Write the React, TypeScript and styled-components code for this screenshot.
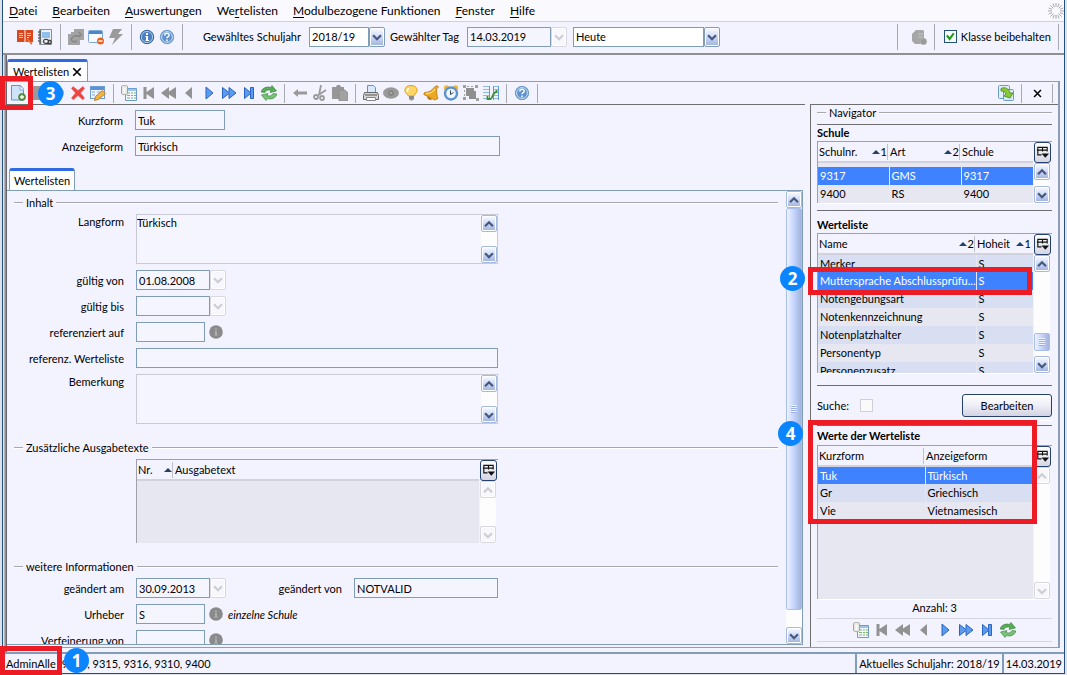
import React from "react";
import styled, { createGlobalStyle, css } from "styled-components";

const GlobalStyle = createGlobalStyle`
  * { box-sizing: border-box; }
  body {
    margin: 0;
    overflow: hidden;
    background: #dde1ea;
    color: #000;
    font: 11px/16px Lato, "Open Sans", sans-serif;
  }
  button, input, select, textarea { font: inherit; color: inherit; margin: 0; }
`;

const line = "#7f9db9";
const dark = "#6e6e6e";
const face = "#f3f3ff";

/* ---------- icons ---------- */

const grey = "#9a9a9a";

const icons: Record<string, React.ReactNode> = {
  book: (
    <>
      <path d="M0 1h7.500v12H0zM8.500 1H16v12H8.500z" fill="#d9481c" />
      <path d="M2 4.500h4M2 6.500h4M2 8.500h4M10 4.500h4M10 6.500h4M10 8.500h2" stroke="#f9c9b4" fill="none" />
      <path d="M10 9l5.500 5-1 2-4.500-5z" fill="#f07040" />
    </>
  ),
  notebook: (
    <>
      <path d="M2.500 .5h12v15h-12z" fill="#eef4fb" stroke="#8a8f96" />
      <path d="M5 3h8v6H5z" fill="#8fc0ea" />
      <path d="M3.500 1v14M1 3h3M1 6h3M1 9h3M1 12h3" stroke="#66676b" strokeWidth="1.300" fill="none" />
      <path d="M6.500 12a2 2 0 0 1 2-1.700h1a2 2 0 0 1 0 4h-1a2 2 0 0 1-2-2.300zM10.500 11.500h3a2 2 0 0 1 0 3h-3" fill="none" stroke="#444" strokeWidth="1.300" />
    </>
  ),
  pages: (
    <>
      <path d="M6 0h10v11h-4v5H0V5h3V3h3z" fill="#a3a3a3" />
      <path d="M3 11c1-4 4-5 8-4M3 11l3 2 3-1M11 3l2 3-3 2" fill="none" stroke="#868686" strokeWidth="1.500" />
    </>
  ),
  windowMinus: (
    <>
      <rect x=".5" y="1.500" width="14" height="12" rx="1" fill="#f7fbff" stroke="#7ea7da" />
      <path d="M1 2h13v3H1z" fill="#4c86d0" />
      <circle cx="12.500" cy="12" r="3.500" fill="#e8641d" />
      <path d="M10.500 12h4" stroke="#fff" strokeWidth="1.400" />
    </>
  ),
  bolt: <path d="M5 0h9l-4 5h5L4 16l3-7H1z" fill={grey} />,
  info: (
    <>
      <circle cx="8" cy="8" r="6.700" fill="#4a80bd" stroke="#2f639f" />
      <circle cx="8" cy="8" r="5.600" fill="none" stroke="#a9c9e8" />
      <path d="M7 4h2v2H7zM6.500 7H9v4h1v1H6.500v-1H7V8h-.5z" fill="#fff" />
    </>
  ),
  help: (
    <>
      <circle cx="8" cy="8" r="6.700" fill="#5e92cc" stroke="#6f9bcb" />
      <circle cx="8" cy="8" r="5.400" fill="none" stroke="#cfe2f5" />
      <path d="M5.800 6.500c0-3 4.400-2.800 4.400-.3 0 1.500-2.200 1.500-2.200 3M8 10.500v1.700" stroke="#fff" strokeWidth="1.500" fill="none" />
    </>
  ),
  database: (
    <>
      <path d="M1 5l4-4h7l1 1v8l-3 5H4l-3-3z" fill="#a6a6a6" />
      <path d="M7 5h5M7 8h5" stroke="#c4c4c4" />
      <circle cx="12.500" cy="12.500" r="3.200" fill="#999" stroke="#b8b8b8" strokeWidth=".6" />
    </>
  ),
  newDoc: (
    <>
      <path d="M1.500.5h9l3 3.500v11h-12z" fill="#cfe3f8" stroke="#5e95cf" />
      <path d="M10 1v4h4" fill="#f5faff" stroke="#7eaad8" />
      <circle cx="12" cy="12" r="3.500" fill="#5c9440" stroke="#3f7426" strokeWidth=".6" />
      <path d="M10 12h4M12 10v4" stroke="#fff" strokeWidth="1.300" />
    </>
  ),
  save: <path d="M1 1h14v14H1z" fill={grey} />,
  undo: <circle cx="8" cy="8" r="6" fill={grey} />,
  remove: <path d="M3 1.500l5 4 5-4 1.500 2L10.500 8l4 5-1.800 1.800L8 10.500l-4.700 4.300L1.500 13l4-5-4-4.500z" fill="#ee4440" stroke="#e65a56" strokeWidth=".6" />,
  edit: (
    <>
      <rect x=".5" y="1.500" width="14" height="12" fill="#eef5fd" stroke="#6d9bd2" />
      <path d="M1 2h13v3H1z" fill="#5b92d6" />
      <path d="M2 7h3M7 7h5M2 10h3" stroke="#7ea7da" />
      <path d="M4.500 15.500l1-4 7-6 3 3-7 6z" fill="#f2b544" stroke="#a87420" strokeWidth=".8" />
    </>
  ),
  sheet: (
    <>
      <path d="M4.500 3.500h11v12h-11z" fill="#f4f9ff" stroke="#6d9bcf" />
      <path d="M5 5h10" stroke="#9dc3ea" strokeWidth="2" />
      <path d="M6 8h3M10 8h2M13 8h2M6 10.500h3M10 10.500h2M13 10.500h2M6 13h3M10 13h2M13 13h2" stroke="#7fb069" />
      <path d="M.5 1.500c0-1.500 6-1.500 6 0v7c0 1.500-6 1.500-6 0z" fill="#e9e9e4" stroke="#a3a39c" />
      <path d="M3.500 3v5" stroke="#fff" strokeWidth="1.500" />
    </>
  ),
  first: <path d="M2.500 2h3v5L13 2v12L5.500 9v5h-3z" fill="#929292" />,
  fastBack: <path d="M0 8l8-6v4.500L15 2v12L8 9.500V14z" fill="#929292" />,
  back: <path d="M4 8l7-6v12z" fill="#929292" />,
  next: <path d="M5 2l7 6-7 6z" fill="#5b9bee" stroke="#2864c0" />,
  fastNext: <path d="M1.500 2.500L8 7.500v-5L15 8l-7 5.500v-5l-6.500 5z" fill="#5b9bee" stroke="#2864c0" />,
  last: <path d="M3.500 2.500l6 5v-5h3v11h-3v-5l-6 5z" fill="#5b9bee" stroke="#2864c0" />,
  refresh: (
    <>
      <path d="M0 7c1-4 6-6 9.500-4.500L11 .5 15.500 6 9 7.500l1-2C7.500 4.500 5 5 4 7.500z" fill="#5aab57" stroke="#2f8136" strokeWidth=".6" />
      <path d="M16 9c-1 4-6 6-9.500 4.500L5 15.500.5 10 7 8.500l-1 2c2.500 1 5 .5 6-2z" fill="#79c274" stroke="#2f8136" strokeWidth=".6" />
    </>
  ),
  arrowLeft: <path d="M1 8l5-4v2.500h9v3H6V12z" fill={grey} />,
  cut: (
    <g fill="none" stroke={grey} strokeWidth="1.800">
      <path d="M9 0L7 10M14 5L5 11" />
      <circle cx="4" cy="12" r="2" />
      <circle cx="10" cy="13" r="2" />
    </g>
  ),
  paste: (
    <>
      <path d="M0 2h4l1-2h3l1 2h3v3H7v9H0z" fill="#979797" />
      <path d="M7 5h6l3 3v8H7z" fill="#a2a2a2" stroke="#8a8a8a" strokeWidth=".8" />
    </>
  ),
  print: (
    <>
      <path d="M4.500 7V.5h6l2 2V7" fill="#d7e9fb" stroke="#5b94cf" />
      <path d="M1.500 7.500h13l1 3v4H.5v-4z" fill="#d4d4d4" stroke="#6a6a6a" />
      <path d="M2 10h12" stroke="#555" />
      <path d="M3.500 12.500h9v3h-9z" fill="#fff" stroke="#888" />
    </>
  ),
  eye: (
    <>
      <ellipse cx="8" cy="8" rx="8" ry="5.800" fill="#9a9a9a" />
      <circle cx="8" cy="8" r="3" fill="#878787" />
      <circle cx="8" cy="8" r="1" fill="#b0b0b0" />
    </>
  ),
  bulb: (
    <>
      <path d="M8 .5c-7 0-7.500 6-4 8.500l1.500 2h5L12 9c3.500-2.500 3-8.500-4-8.500z" fill="#fdd667" stroke="#e79b20" />
      <path d="M6 3.500c-2 .5-2 2.500-1 3.500" stroke="#fff" strokeWidth="1.500" fill="none" />
      <path d="M6 11h5v3.500H9.500v1h-2v-1H6z" fill="#8b8b8b" />
    </>
  ),
  bell: (
    <>
      <path d="M14 .5l1.500 1.500-2 2c.5 4 0 7 1.500 9.500l-3 1.500L.8 9.500l.7-2C5 7.500 9 6 11 2.500z" fill="#eda91f" stroke="#b87410" strokeWidth=".8" />
      <path d="M3 8.500c4 0 7.500-2 9-4.500" stroke="#fde08a" strokeWidth="1.300" fill="none" />
      <path d="M4 11l5 3c-1 2-5 1-5-3z" fill="#b87416" />
    </>
  ),
  clock: (
    <>
      <circle cx="3.500" cy="3" r="2.700" fill="#f1b53c" />
      <circle cx="12.500" cy="3" r="2.700" fill="#f1b53c" />
      <circle cx="8" cy="8.500" r="6" fill="#eef6ff" stroke="#5b93cf" strokeWidth="2.400" />
      <path d="M7.500 5.500v4l3-2" stroke="#345" fill="none" />
    </>
  ),
  group: (
    <>
      <path d="M3 3h8v3h2v8H6v-3H3z" fill="#8f8f8f" />
      <path d="M0 0h3v3H0zM12 0h3v3h-3zM0 12h3v3H0zM13 13h3v3h-3zM4 1h2v1H4zM8 1h2v1H8zM1 5h1v2H1zM1 9h1v2H1z" fill="#a0a0a0" />
    </>
  ),
  compare: (
    <>
      <path d="M0 1.500h6M0 4.500h6M0 7.500h6M0 10.500h6M0 13.500h6M11 1.500h4M11 4.500h4M11 7.500h4M11 10.500h4M11 13.500h4" stroke="#8fbbe6" />
      <path d="M6.500 1v14M10.500 1v14M15.500 1v14" stroke="#5f9ad6" />
      <path d="M4.500 11v3h3c2 0 2-7 6-7V5" stroke="#3f8f3a" strokeWidth="1.800" fill="none" />
    </>
  ),
  transfer: (
    <>
      <rect x=".5" y=".5" width="11" height="13" rx="1" fill="#e3effb" stroke="#6c9ccc" />
      <rect x="5.500" y="4.500" width="10" height="11" rx="1" fill="#d5e6f7" stroke="#6c9ccc" />
      <path d="M3 3.500c4-2 8 0 9 4.500h3l-3 5-6-2 2-2c-1-2-2-3-5-3z" fill="#8cc832" stroke="#3f8a1c" strokeWidth=".8" />
    </>
  ),
  spinner: (
    <path d="M8 0v4M8 12v4M0 8h4M12 8h4M2.300 2.300l3 3M10.700 10.700l3 3M2.300 13.700l3-3M10.700 5.300l3-3M5 .6l1.300 3.600M9.700 11.800l1.300 3.600M.6 5l3.600 1.300M11.800 9.700l3.600 1.300M11 .6L9.700 4.200M6.300 11.800L5 15.400M.6 11l3.600-1.300M11.800 6.300L15.400 5" stroke="#a9a9ae" />
  ),
  infoGrey: (
    <>
      <circle cx="8" cy="8" r="7.800" fill="#8a8a8a" />
      <path d="M7 4h2v2H7zM6.500 7H9v4h1v1H6v-1h1V8h-.5z" fill="#b3b3b3" />
    </>
  ),
  columns: (
    <>
      <path d="M13 7V2.500H3v8h4M2 5.500h11M8 3v4" fill="none" stroke="#111" strokeWidth="1.200" />
      <path d="M7 9h8l-4 4.500z" fill="#111" />
    </>
  ),
  up: <path d="M3.500 10.500L8 6l4.500 4.500" fill="none" stroke="currentColor" strokeWidth="2.600" />,
  down: <path d="M3.500 6L8 10.500 12.500 6" fill="none" stroke="currentColor" strokeWidth="2.600" />,
  close: <path d="M3 3l10 10M13 3L3 13" stroke="#000" strokeWidth="2.200" />,
  check: <path d="M3.500 6.500L7 11l5-7" fill="none" stroke="#1f9a1f" strokeWidth="2.600" />,
};

const Svg = styled.svg<{ $size: number }>`
  display: block;
  flex: none;
  width: ${(p) => p.$size}px;
  height: ${(p) => p.$size}px;
`;

const Icon = ({ name, size = 16 }: { name: string; size?: number }) => (
  <Svg $size={size} viewBox="0 0 16 16" aria-hidden="true">
    {icons[name]}
  </Svg>
);

/* ---------- window ---------- */

const Desktop = styled.div`
  display: flex;
  height: 100vh;
  padding: 0 2px 1px;
`;

const Window = styled.div`
  flex: 1;
  min-width: 0;
  display: flex;
  flex-direction: column;
  background: ${face};
  border: solid #26507c;
  border-width: 0 1px 1px;
`;

const MenuBar = styled.nav`
  display: flex;
  align-items: center;
  gap: 15px;
  height: 22px;
  padding: 0 0 0 6px;
  background: #f9f9fe;
  border-bottom: 1px solid #d0d0d8;
  font-size: 12px;
`;

const MenuItem = styled.button`
  padding: 0;
  border: 0;
  background: none;
  white-space: nowrap;
  text-underline-offset: 2px;
`;

const Push = styled.div`
  margin-left: auto;
  display: flex;
  align-items: center;
`;

const ToolBar = styled.div`
  display: flex;
  align-items: center;
  height: 33px;
  padding: 0 0 2px 12px;
  border-bottom: 2px solid #909090;
`;

const Separator = styled.span<{ $tall?: boolean }>`
  flex: none;
  width: 1px;
  height: ${(p) => (p.$tall ? 26 : 19)}px;
  margin: 0 5px;
  background: #a9a9b0;
`;

const IconButton = styled.button`
  position: relative;
  flex: none;
  display: flex;
  align-items: center;
  justify-content: center;
  width: 20px;
  height: 20px;
  padding: 0;
  border: 0;
  background: none;
`;

const Tool = ({ icon, label }: { icon: string; label: string }) => (
  <IconButton type="button" aria-label={label}>
    <Icon name={icon} />
  </IconButton>
);

/* ---------- fields ---------- */

const BarLabel = styled.label<{ $w: number }>`
  flex: none;
  width: ${(p) => p.$w}px;
  padding-right: 8px;
  text-align: right;
  white-space: nowrap;
`;

const Gap = styled.span`
  flex: none;
  width: 6px;
`;

const TextInput = styled.input<{ $w: number }>`
  width: ${(p) => p.$w}px;
  height: 20px;
  padding: 0 2px;
  background: #f5f5ff;
  border: 1px solid ${line};
  border-radius: 0;
  outline: 0;
`;

const Combo = styled.span<{ $w: number }>`
  display: flex;
  width: ${(p) => p.$w}px;
`;

const Select = styled.select`
  flex: 1;
  min-width: 0;
  height: 20px;
  padding: 0 2px;
  appearance: none;
  background: #fff;
  border: 1px solid ${line};
  border-radius: 0;
`;

const arrowFace = css<{ $off?: boolean }>`
  flex: none;
  display: flex;
  align-items: center;
  justify-content: center;
  width: 16px;
  padding: 0;
  border: 1px solid ${(p) => (p.$off ? "#d8d8e2" : "#a6badf")};
  border-radius: 2px;
  color: ${(p) => (p.$off ? "#cdcdd6" : "#46597d")};
  background: ${(p) => (p.$off ? "#f8f8fc" : "linear-gradient(#fbfcff, #cdd9fa 50%, #9fb1da)")};
  box-shadow: inset 0 0 0 1px #fff;
`;

const ComboArrow = styled.span`
  ${arrowFace}
  height: 20px;
  border-color: #7f9db9;
`;

const ArrowButton = styled.button<{ $off?: boolean }>`
  ${arrowFace}
  height: 20px;
`;

const ScrollArrow = styled.button<{ $off?: boolean }>`
  ${arrowFace}
  height: 17px;
`;

const DateField = ({ id, value, w, label }: { id?: string; value: string; w: number; label: string }) => (
  <>
    <TextInput id={id} $w={w} defaultValue={value} />
    <ArrowButton type="button" $off disabled aria-label={label + " auswählen"}>
      <Icon name="down" size={14} />
    </ArrowButton>
  </>
);

const CheckBox = styled.input`
  appearance: none;
  width: 13px;
  height: 13px;
  border: 1px solid #cfcfd6;
  background: #fafafa;
`;

const Tick = styled.span`
  display: grid;
  > * { grid-area: 1 / 1; }
  > input { border-color: #24507e; }
  > svg { pointer-events: none; }
`;

const CheckLabel = styled.label`
  display: flex;
  align-items: center;
  gap: 4px;
  padding: 0 2px 0 4px;
  white-space: nowrap;
`;

/* ---------- scroll bar ---------- */

const Track = styled.div`
  flex: none;
  min-height: 0;
  display: flex;
  flex-direction: column;
  width: 16px;
  background: #fdfdfd;
`;

const Space = styled.div<{ $grow: number }>`
  flex: ${(p) => p.$grow} 1 0;
`;

const Thumb = styled.div<{ $grow: number }>`
  flex: ${(p) => p.$grow} 1 0;
  min-height: 17px;
  display: flex;
  align-items: center;
  justify-content: center;
  border: 1px solid #a9bfe8;
  border-radius: 2px;
  background: linear-gradient(90deg, #eef3ff, #c3d3fb 50%, #a3b4dc);
  &::after {
    content: "";
    width: 6px;
    height: 8px;
    background: repeating-linear-gradient(#eef3ff 0 1px, #9db3e4 1px 2px);
  }
`;

const ScrollBar = ({ off, thumb }: { off?: boolean; thumb?: [number, number, number] }) => (
  <Track>
    <ScrollArrow type="button" $off={off} aria-label="Nach oben">
      <Icon name="up" size={14} />
    </ScrollArrow>
    {thumb ? (
      <>
        <Space $grow={thumb[0]} />
        <Thumb $grow={thumb[1]} />
        <Space $grow={thumb[2]} />
      </>
    ) : (
      <Space $grow={1} />
    )}
    <ScrollArrow type="button" $off={off} aria-label="Nach unten">
      <Icon name="down" size={14} />
    </ScrollArrow>
  </Track>
);

/* ---------- work area ---------- */

const Workspace = styled.div`
  flex: 1;
  min-height: 0;
  display: flex;
  flex-direction: column;
  padding: 0 4px;
  background: linear-gradient(90deg, #e4e4ee 1px, #b4b4ba 1px 2px, #8e8e94 2px 3px, #66666c 3px 4px, transparent 4px);
`;

const TabStrip = styled.div<{ $pad: number }>`
  display: flex;
  align-items: flex-end;
  padding-left: ${(p) => p.$pad}px;
`;

const MainTabs = styled(TabStrip)`
  height: 26px;
`;

const InnerTabs = styled(TabStrip)`
  margin-top: 12px;
`;

const Tab = styled.button`
  display: flex;
  align-items: center;
  justify-content: space-between;
  width: 66px;
  height: 22px;
  padding: 0 2px 0 4px;
  background: #fff;
  border: 1px solid ${line};
  border-top: 3px solid #2f6ae0;
  border-bottom: 0;
  border-radius: 3px 3px 0 0;
  white-space: nowrap;
`;

const MainTab = styled(Tab)`
  width: 81px;
  padding: 0 4px 0 5px;
`;

const Frame = styled.div`
  flex: 1;
  min-height: 0;
  display: flex;
  flex-direction: column;
  border: solid #8b9fb8;
  border-width: 1px 2px 1px 0;
  margin-bottom: 4px;
`;

const IconBar = styled.div`
  display: flex;
  align-items: center;
  height: 22px;
  padding-left: 1px;
`;

const Columns = styled.div`
  flex: 1;
  min-height: 0;
  display: flex;
  gap: 5px;
`;

const Editor = styled.main`
  flex: 1;
  min-width: 0;
  display: flex;
  flex-direction: column;
  padding: 5px 2px 2px 0;
  border-top: 1px solid ${dark};
`;

const Rows = styled.div`
  display: flex;
  flex-direction: column;
  gap: 6px;
`;

const FieldRow = styled.div`
  display: flex;
  align-items: flex-start;
`;

const FieldLabel = styled.label<{ $w: number; $top?: boolean }>`
  flex: none;
  width: ${(p) => p.$w}px;
  margin-right: 12px;
  padding-top: ${(p) => (p.$top ? 0 : 3)}px;
  text-align: right;
  white-space: nowrap;
`;

const InnerPanel = styled.div`
  flex: 1;
  min-height: 0;
  display: flex;
  padding-left: 1px;
  border: solid ${line};
  border-width: 1px 1px 1px 0;
`;

const ScrollArea = styled.div`
  flex: 1;
  min-width: 0;
  overflow: hidden;
  padding: 4px 8px 0 6px;
`;

const Group = styled.fieldset`
  min-width: 0;
  margin: 0 0 16px;
  padding: 0;
  border: 0;
`;

const Legend = styled.legend`
  display: flex;
  align-items: center;
  gap: 3px;
  width: 100%;
  height: 16px;
  margin-bottom: 3px;
  padding: 0;
  white-space: nowrap;
  &::before, &::after {
    content: "";
    width: 9px;
    height: 2px;
    background: linear-gradient(#a6a6b0 50%, #fff 50%);
  }
  &::after { flex: 1; }
`;

const MemoBox = styled.div`
  display: flex;
  width: 362px;
  height: 50px;
  border: 1px solid #c9c9d6;
`;

const Memo = styled.textarea`
  flex: 1;
  min-width: 0;
  padding: 0;
  border: 0;
  outline: 0;
  resize: none;
  overflow: hidden;
  background: #f5f5ff;
`;

const InfoMark = styled.span`
  padding: 3px 5px 3px 4px;
`;

const Hint = styled.em`
  padding-top: 3px;
`;

/* ---------- tables ---------- */

const TableBox = styled.div<{ $h?: number; $w?: number }>`
  display: flex;
  ${(p) => (p.$h ? `height: ${p.$h}px;` : "flex: 1; min-height: 0;")}
  ${(p) => (p.$w ? `width: ${p.$w}px;` : "")}
  border: solid #a0a0a8;
  border-width: 1px 0 0 1px;
`;

const TableView = styled.div`
  flex: 1;
  min-width: 0;
  overflow: hidden;
  background: #e7e7f1;
`;

const SideColumn = styled.div`
  flex: none;
  width: 19px;
  padding: 0 1px;
  display: grid;
  grid-template-rows: auto 1fr;
`;

const ColumnButton = styled.button`
  display: flex;
  align-items: center;
  justify-content: center;
  width: 17px;
  height: 21px;
  padding: 0;
  background: linear-gradient(#fff, #d6d6e4);
  border: 1px solid #24406c;
  border-radius: 3px;
`;

const Table = styled.table`
  width: 100%;
  table-layout: fixed;
  border-collapse: collapse;
`;

const HeadCell = styled.th<{ $w?: number }>`
  ${(p) => (p.$w ? `width: ${p.$w}px;` : "")}
  height: 20px;
  padding: 0 1px;
  background: ${face};
  border-bottom: 2px solid #d2d2dc;
  font-weight: normal;
`;

const HeadInner = styled.div<{ $last?: boolean }>`
  display: flex;
  align-items: center;
  justify-content: space-between;
  height: 16px;
  border-right: 1px solid ${(p) => (p.$last ? "transparent" : "#c0c0c8")};
  white-space: nowrap;
`;

const Sort = styled.span`
  display: flex;
  align-items: center;
  gap: 1px;
  &::before {
    content: "";
    border: solid transparent;
    border-width: 0 4px 4px;
    border-bottom-color: #24406c;
  }
`;

const Row = styled.tr<{ $tone?: "selected" | "odd" | "gap" }>`
  height: ${(p) => (p.$tone === "gap" ? 5 : 18)}px;
  background: ${(p) => (p.$tone === "selected" ? "#3f82ff" : p.$tone === "odd" ? "#d8dff3" : "#e7e7f1")};
  color: ${(p) => (p.$tone === "selected" ? "#fff" : "#000")};
  td + td { border-left: 1px solid ${(p) => (p.$tone === "selected" ? "#dfe8ff" : "transparent")}; }
`;

const Cell = styled.td`
  padding: 0 0 0 2px;
  line-height: 16px;
  overflow: hidden;
  white-space: nowrap;
`;

type Col = { name: string; w?: number; sort?: string };
const DataTable = ({
  cols, rows, h, w, selected = -1, striped, gap, side,
}: {
  cols: Col[]; rows: string[][]; h?: number; w?: number; selected?: number; striped?: number; gap?: boolean; side: React.ReactNode;
}) => (
  <TableBox $h={h} $w={w}>
    <TableView>
      <Table>
        <thead>
          <tr>
            {cols.map((c, i) => (
              <HeadCell key={c.name} $w={c.w} scope="col">
                <HeadInner $last={i === cols.length - 1}>
                  {c.name}
                  {c.sort !== undefined && <Sort>{c.sort}</Sort>}
                </HeadInner>
              </HeadCell>
            ))}
          </tr>
        </thead>
        <tbody>
          {gap && <Row $tone="gap" />}
          {rows.map((r, i) => (
            <Row key={r[0]} $tone={i === selected ? "selected" : striped !== undefined && i % 2 === striped ? "odd" : undefined}>
              {r.map((v, k) => (
                <Cell key={k}>{v}</Cell>
              ))}
            </Row>
          ))}
        </tbody>
      </Table>
    </TableView>
    <SideColumn>
      <ColumnButton type="button" aria-label="Spalten auswählen">
        <Icon name="columns" size={15} />
      </ColumnButton>
      {side}
    </SideColumn>
  </TableBox>
);

/* ---------- navigator ---------- */

const Navigator = styled.aside`
  flex: none;
  display: flex;
  flex-direction: column;
  width: 248px;
  padding: 0 6px 0 6px;
  border: solid ${dark};
  border-width: 1px 0 0 1px;
`;

const Section = styled.section<{ $h?: number; $top?: number }>`
  position: relative;
  display: flex;
  flex-direction: column;
  ${(p) => (p.$h ? `height: ${p.$h}px; margin-bottom: 6px;` : "flex: 1; min-height: 0;")}
  padding-top: ${(p) => p.$top ?? 0}px;
  border-top: 1px solid ${dark};
  border-bottom: 1px solid #fff;
`;

const Heading = styled.h2<{ $tall?: boolean }>`
  margin: 0;
  font-size: 11px;
  line-height: ${(p) => (p.$tall ? 19 : 16)}px;
`;

const SearchRow = styled.div`
  display: flex;
  align-items: center;
  justify-content: space-between;
  height: 36px;
  margin: 5px 0 4px;
  padding-top: 5px;
  border-top: 1px solid ${dark};
  border-bottom: 1px solid #fff;
`;

const SearchLabel = styled.label`
  display: flex;
  align-items: center;
  gap: 11px;
`;

const PushButton = styled.button`
  width: 90px;
  height: 23px;
  padding: 0;
  border: 1px solid #24406c;
  border-radius: 3px;
  background: linear-gradient(#fff, #eeeef8 50%, #d3d3e2);
`;

const Count = styled.p`
  margin: 0;
  text-align: center;
`;

const Pager = styled.div`
  display: flex;
  justify-content: center;
  gap: 1px;
  margin: 2px 0 5px;
  padding: 1px 0;
  border: solid #d5d5e2;
  border-width: 1px 0;
`;

/* ---------- status bar ---------- */

const StatusBar = styled.footer`
  display: flex;
  height: 21px;
  border-top: 2px solid ${line};
`;

const StatusCell = styled.div<{ $grow?: boolean }>`
  position: relative;
  ${(p) => (p.$grow ? "flex: 1;" : `border-left: 2px solid ${line};`)}
  display: flex;
  align-items: center;
  gap: 6px;
  padding: 0 ${(p) => (p.$grow ? 3 : 2)}px;
  white-space: nowrap;
`;

/* ---------- callouts ---------- */

const Mark = styled.span<{ $x: number; $y: number; $w: number; $h: number }>`
  position: absolute;
  z-index: 2;
  left: ${(p) => p.$x}px;
  top: ${(p) => p.$y}px;
  width: ${(p) => p.$w}px;
  height: ${(p) => p.$h}px;
  border: 5px solid #ed1c24;
  pointer-events: none;
`;

const Step = styled.span<{ $x: number; $y: number }>`
  position: absolute;
  z-index: 3;
  left: ${(p) => p.$x}px;
  top: ${(p) => p.$y}px;
  width: 25px;
  height: 25px;
  border-radius: 50%;
  background: #0a84ff;
  color: #fff;
  font: bold 17px/25px "Open Sans", sans-serif;
  text-align: center;
`;

const menu = [
  ["", "D", "atei"], ["", "B", "earbeiten"], ["", "A", "uswertungen"], ["We", "r", "telisten"],
  ["", "M", "odulbezogene Funktionen"], ["", "F", "enster"], ["", "H", "ilfe"],
];

const pager = [
  ["sheet", "Liste"], ["first", "Erster"], ["fastBack", "Schnell zurück"], ["back", "Zurück"],
  ["next", "Weiter"], ["fastNext", "Schnell weiter"], ["last", "Letzter"], ["refresh", "Aktualisieren"],
];

const Tools = ({ items }: { items: string[][] }) => (
  <>
    {items.map(([i, l]) => (
      <Tool key={i} icon={i} label={l} />
    ))}
  </>
);

export default function App() {
  return (
    <Desktop>
      <GlobalStyle />
      <Window>
        <MenuBar>
          {menu.map(([a, b, c]) => (
            <MenuItem type="button" key={c}>
              {a}<u>{b}</u>{c}
            </MenuItem>
          ))}
          <Push><Icon name="spinner" /></Push>
        </MenuBar>

        <ToolBar>
          <Tools items={[["book", "Klassenbuch"], ["notebook", "Notizbuch"]]} />
          <Separator $tall />
          <Tools items={[["pages", "Seiten"], ["windowMinus", "Fenster schließen"], ["bolt", "Ausführen"]]} />
          <Separator $tall />
          <Tools items={[["info", "Info"], ["help", "Hilfe"]]} />
          <Separator $tall />
          <BarLabel $w={121} htmlFor="jahr">Gewähltes Schuljahr</BarLabel>
          <Combo $w={76}>
            <Select id="jahr"><option>2018/19</option></Select>
            <ComboArrow><Icon name="down" size={14} /></ComboArrow>
          </Combo>
          <BarLabel $w={82} htmlFor="tag">Gewählter Tag</BarLabel>
          <DateField id="tag" value="14.03.2019" w={84} label="Tag" />
          <Gap />
          <Combo $w={147}>
            <Select aria-label="Zeitraum"><option>Heute</option></Select>
            <ComboArrow><Icon name="down" size={14} /></ComboArrow>
          </Combo>
          <Push>
            <Separator $tall />
            <Gap />
            <Tool icon="database" label="Datenbank" />
            <Separator $tall />
            <CheckLabel>
              <Tick>
                <CheckBox type="checkbox" defaultChecked />
                <Icon name="check" size={13} />
              </Tick>
              Klasse beibehalten
            </CheckLabel>
            <Separator $tall />
          </Push>
        </ToolBar>

        <Workspace>
          <MainTabs $pad={0}>
            <MainTab type="button">Wertelisten<Icon name="close" size={12} /></MainTab>
          </MainTabs>
          <Frame>
            <IconBar>
              <IconButton type="button" aria-label="Neu">
                <Icon name="newDoc" />
                <Mark $x={-8} $y={-7} $w={33} $h={34} />
                <Step $x={30} $y={-2}>3</Step>
              </IconButton>
              <Tools items={[["save", "Speichern"], ["undo", "Rückgängig"], ["remove", "Löschen"], ["edit", "Bearbeiten"]]} />
              <Separator />
              <Tools items={pager} />
              <Separator />
              <Tools items={[["arrowLeft", "Zurück"], ["cut", "Ausschneiden"], ["paste", "Einfügen"]]} />
              <Separator />
              <Tools items={[["print", "Drucken"], ["eye", "Vorschau"], ["bulb", "Hinweis"], ["bell", "Erinnerung"], ["clock", "Termin"], ["group", "Gruppieren"], ["compare", "Vergleichen"]]} />
              <Separator />
              <Tool icon="help" label="Hilfe" />
              <Separator />
              <Push>
                <Tool icon="transfer" label="Übernehmen" />
                <Separator />
                <IconButton type="button" aria-label="Schließen"><Icon name="close" size={11} /></IconButton>
                <Separator />
              </Push>
            </IconBar>

            <Columns>
              <Editor>
                <Rows>
                  <FieldRow>
                    <FieldLabel $w={116} htmlFor="kurz">Kurzform</FieldLabel>
                    <TextInput id="kurz" $w={90} defaultValue="Tuk" />
                  </FieldRow>
                  <FieldRow>
                    <FieldLabel $w={116} htmlFor="anzeige">Anzeigeform</FieldLabel>
                    <TextInput id="anzeige" $w={365} defaultValue="Türkisch" />
                  </FieldRow>
                </Rows>
                <InnerTabs $pad={2}>
                  <Tab type="button">Wertelisten</Tab>
                </InnerTabs>
                <InnerPanel>
                  <ScrollArea>
                    <Group>
                      <Legend>Inhalt</Legend>
                      <Rows>
                        <FieldRow>
                          <FieldLabel $top $w={110} htmlFor="lang">Langform</FieldLabel>
                          <MemoBox><Memo id="lang" defaultValue="Türkisch" /><ScrollBar /></MemoBox>
                        </FieldRow>
                        <FieldRow>
                          <FieldLabel $w={110} htmlFor="von">gültig von</FieldLabel>
                          <DateField id="von" value="01.08.2008" w={74} label="gültig von" />
                        </FieldRow>
                        <FieldRow>
                          <FieldLabel $w={110} htmlFor="bis">gültig bis</FieldLabel>
                          <DateField id="bis" value="" w={74} label="gültig bis" />
                        </FieldRow>
                        <FieldRow>
                          <FieldLabel $w={110} htmlFor="ref">referenziert auf</FieldLabel>
                          <TextInput id="ref" $w={69} />
                          <InfoMark><Icon name="infoGrey" size={14} /></InfoMark>
                        </FieldRow>
                        <FieldRow>
                          <FieldLabel $w={110} htmlFor="refliste">referenz. Werteliste</FieldLabel>
                          <TextInput id="refliste" $w={362} />
                        </FieldRow>
                        <FieldRow>
                          <FieldLabel $top $w={110} htmlFor="bem">Bemerkung</FieldLabel>
                          <MemoBox><Memo id="bem" /><ScrollBar /></MemoBox>
                        </FieldRow>
                      </Rows>
                    </Group>
                    <Group>
                      <Legend>Zusätzliche Ausgabetexte</Legend>
                      <FieldRow>
                        <FieldLabel as="span" $w={110} />
                        <DataTable w={362} h={84} rows={[]} cols={[{ name: "Nr.", w: 37, sort: "" }, { name: "Ausgabetext" }]} side={<ScrollBar off />} />
                      </FieldRow>
                    </Group>
                    <Group>
                      <Legend>weitere Informationen</Legend>
                      <Rows>
                        <FieldRow>
                          <FieldLabel $w={110} htmlFor="geaendert">geändert am</FieldLabel>
                          <DateField id="geaendert" value="30.09.2013" w={74} label="geändert am" />
                          <FieldLabel $w={116} htmlFor="durch">geändert von</FieldLabel>
                          <TextInput id="durch" $w={144} defaultValue="NOTVALID" />
                        </FieldRow>
                        <FieldRow>
                          <FieldLabel $w={110} htmlFor="urheber">Urheber</FieldLabel>
                          <TextInput id="urheber" $w={69} defaultValue="S" />
                          <InfoMark><Icon name="infoGrey" size={14} /></InfoMark>
                          <Hint>einzelne Schule</Hint>
                        </FieldRow>
                        <FieldRow>
                          <FieldLabel $w={110} htmlFor="verf">Verfeinerung von</FieldLabel>
                          <TextInput id="verf" $w={69} />
                          <InfoMark><Icon name="infoGrey" size={14} /></InfoMark>
                        </FieldRow>
                      </Rows>
                    </Group>
                  </ScrollArea>
                  <ScrollBar thumb={[0, 403, 17]} />
                </InnerPanel>
              </Editor>

              <Navigator>
                <Legend as="div">Navigator</Legend>
                <Section $h={80}>
                  <Heading>Schule</Heading>
                  <DataTable
                    cols={[{ name: "Schulnr.", w: 71, sort: "1" }, { name: "Art", w: 72, sort: "2" }, { name: "Schule" }]}
                    rows={[["9317", "GMS", "9317"], ["9400", "RS", "9400"]]}
                    selected={0}
                    gap
                    side={<ScrollBar />}
                  />
                </Section>
                <Section $h={164} $top={6}>
                  <Heading>Werteliste</Heading>
                  <DataTable
                    cols={[{ name: "Name", sort: "2" }, { name: "Hoheit", w: 57, sort: "1" }]}
                    rows={["Merker", "Muttersprache Abschlussprüfu...", "Notengebungsart", "Notenkennzeichnung", "Notenplatzhalter", "Personentyp", "Personenzusatz"].map((n) => [n, "S"])}
                    selected={1}
                    striped={0}
                    side={<ScrollBar thumb={[62, 17, 5]} />}
                  />
                  <Mark $x={-9} $y={56} $w={224} $h={28} />
                  <Step $x={-37} $y={55}>2</Step>
                </Section>
                <SearchRow>
                  <SearchLabel>Suche:<CheckBox type="checkbox" /></SearchLabel>
                  <PushButton type="button">Bearbeiten</PushButton>
                </SearchRow>
                <Section>
                  <Heading $tall>Werte der Werteliste</Heading>
                  <DataTable
                    cols={[{ name: "Kurzform", w: 107 }, { name: "Anzeigeform" }]}
                    rows={[["Tuk", "Türkisch"], ["Gr", "Griechisch"], ["Vie", "Vietnamesisch"]]}
                    selected={0}
                    striped={1}
                    side={<ScrollBar off />}
                  />
                  <Mark $x={-9} $y={-6} $w={229} $h={104} />
                  <Step $x={-39} $y={-5}>4</Step>
                </Section>
                <Count>Anzahl: 3</Count>
                <Pager><Tools items={pager} /></Pager>
              </Navigator>
            </Columns>
          </Frame>
        </Workspace>

        <StatusBar>
          <StatusCell $grow>
            <span>AdminAlle</span>
            <span>9317, 9315, 9316, 9310, 9400</span>
            <Mark $x={-3} $y={-8} $w={62} $h={29} />
            <Step $x={61} $y={-6}>1</Step>
          </StatusCell>
          <StatusCell>Aktuelles Schuljahr: 2018/19</StatusCell>
          <StatusCell>14.03.2019</StatusCell>
        </StatusBar>
      </Window>
    </Desktop>
  );
}
